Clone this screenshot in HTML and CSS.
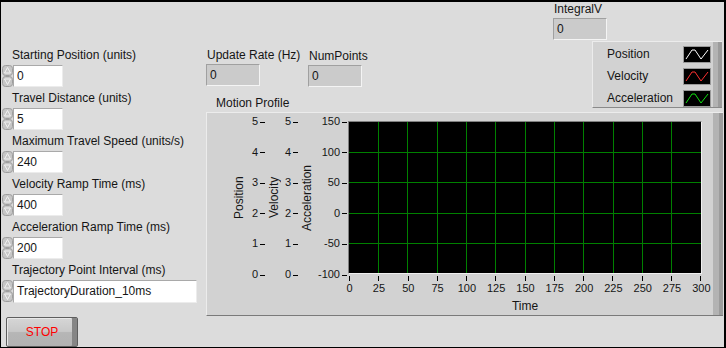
FILE: index.html
```html
<!DOCTYPE html>
<html>
<head>
    <title>Motion Profile</title>
    <link rel="stylesheet" href="styles.css">
</head>
<body>

    <div class="panel">

        <div class="controls">
            <div class="field">
                <label class="label">Starting Position (units)</label>
                <div class="entry">
                    <svg class="spin" width="11" height="22" viewBox="0 0 11 22"><rect x="0.5" y="0.5" width="10" height="10" rx="3" fill="#c6c6c6" stroke="#9e9e9e"/><path d="M5.5 2.5 L8.5 8 H2.5 Z" fill="none" stroke="#f2f2f2"/><rect x="0.5" y="11.5" width="10" height="10" rx="3" fill="#c6c6c6" stroke="#9e9e9e"/><path d="M5.5 19.5 L8.5 14 H2.5 Z" fill="none" stroke="#f2f2f2"/></svg>
                    <div class="input">0</div>
                </div>
            </div>
            <div class="field">
                <label class="label">Travel Distance (units)</label>
                <div class="entry">
                    <svg class="spin" width="11" height="22" viewBox="0 0 11 22"><rect x="0.5" y="0.5" width="10" height="10" rx="3" fill="#c6c6c6" stroke="#9e9e9e"/><path d="M5.5 2.5 L8.5 8 H2.5 Z" fill="none" stroke="#f2f2f2"/><rect x="0.5" y="11.5" width="10" height="10" rx="3" fill="#c6c6c6" stroke="#9e9e9e"/><path d="M5.5 19.5 L8.5 14 H2.5 Z" fill="none" stroke="#f2f2f2"/></svg>
                    <div class="input">5</div>
                </div>
            </div>
            <div class="field">
                <label class="label">Maximum Travel Speed (units/s)</label>
                <div class="entry">
                    <svg class="spin" width="11" height="22" viewBox="0 0 11 22"><rect x="0.5" y="0.5" width="10" height="10" rx="3" fill="#c6c6c6" stroke="#9e9e9e"/><path d="M5.5 2.5 L8.5 8 H2.5 Z" fill="none" stroke="#f2f2f2"/><rect x="0.5" y="11.5" width="10" height="10" rx="3" fill="#c6c6c6" stroke="#9e9e9e"/><path d="M5.5 19.5 L8.5 14 H2.5 Z" fill="none" stroke="#f2f2f2"/></svg>
                    <div class="input">240</div>
                </div>
            </div>
            <div class="field">
                <label class="label">Velocity Ramp Time (ms)</label>
                <div class="entry">
                    <svg class="spin" width="11" height="22" viewBox="0 0 11 22"><rect x="0.5" y="0.5" width="10" height="10" rx="3" fill="#c6c6c6" stroke="#9e9e9e"/><path d="M5.5 2.5 L8.5 8 H2.5 Z" fill="none" stroke="#f2f2f2"/><rect x="0.5" y="11.5" width="10" height="10" rx="3" fill="#c6c6c6" stroke="#9e9e9e"/><path d="M5.5 19.5 L8.5 14 H2.5 Z" fill="none" stroke="#f2f2f2"/></svg>
                    <div class="input">400</div>
                </div>
            </div>
            <div class="field">
                <label class="label">Acceleration Ramp Time (ms)</label>
                <div class="entry">
                    <svg class="spin" width="11" height="22" viewBox="0 0 11 22"><rect x="0.5" y="0.5" width="10" height="10" rx="3" fill="#c6c6c6" stroke="#9e9e9e"/><path d="M5.5 2.5 L8.5 8 H2.5 Z" fill="none" stroke="#f2f2f2"/><rect x="0.5" y="11.5" width="10" height="10" rx="3" fill="#c6c6c6" stroke="#9e9e9e"/><path d="M5.5 19.5 L8.5 14 H2.5 Z" fill="none" stroke="#f2f2f2"/></svg>
                    <div class="input">200</div>
                </div>
            </div>
            <div class="field">
                <label class="label">Trajectory Point Interval (ms)</label>
                <div class="entry">
                    <svg class="spin" width="11" height="22" viewBox="0 0 11 22"><rect x="0.5" y="0.5" width="10" height="10" rx="3" fill="#c6c6c6" stroke="#9e9e9e"/><path d="M5.5 2.5 L8.5 8 H2.5 Z" fill="none" stroke="#f2f2f2"/><rect x="0.5" y="11.5" width="10" height="10" rx="3" fill="#c6c6c6" stroke="#9e9e9e"/><path d="M5.5 19.5 L8.5 14 H2.5 Z" fill="none" stroke="#f2f2f2"/></svg>
                    <div class="input ring">TrajectoryDuration_10ms</div>
                </div>
            </div>
            <button class="stop">STOP</button>
        </div>

        <div class="main">
            <div class="top">
                <div class="readouts">
                    <div class="indicators">
                        <div class="readout">
                            <div class="label">Update Rate (Hz)</div>
                            <div class="value">0</div>
                        </div>
                        <div class="readout numpoints">
                            <div class="label">NumPoints</div>
                            <div class="value">0</div>
                        </div>
                    </div>
                    <div class="label graph-label">Motion Profile</div>
                </div>
                <div class="side">
                    <div class="readout">
                        <div class="label">IntegralV</div>
                        <div class="value">0</div>
                    </div>
                    <div class="legend">
                        <span>Position</span>
                        <svg width="28" height="17" viewBox="0 0 28 17"><rect x="0.5" y="0.5" width="27" height="16" fill="#000" stroke="#9a9a9a"/><polyline points="3,13 9,4 12,4 18,13 25,4" fill="none" stroke="#fff"/></svg>
                        <span>Velocity</span>
                        <svg width="28" height="17" viewBox="0 0 28 17"><rect x="0.5" y="0.5" width="27" height="16" fill="#000" stroke="#9a9a9a"/><polyline points="3,13 9,4 12,4 18,13 25,4" fill="none" stroke="#ff3030"/></svg>
                        <span>Acceleration</span>
                        <svg width="28" height="17" viewBox="0 0 28 17"><rect x="0.5" y="0.5" width="27" height="16" fill="#000" stroke="#9a9a9a"/><polyline points="3,13 9,4 12,4 18,13 25,4" fill="none" stroke="#10e010"/></svg>
                    </div>
                </div>
            </div>

            <div class="graph">
                <div class="axis-title t1">Position</div>
                <div class="scale s1"><span>5</span><span>4</span><span>3</span><span>2</span><span>1</span><span>0</span></div>
                <div class="axis-title t2">Velocity</div>
                <div class="scale s2"><span>5</span><span>4</span><span>3</span><span>2</span><span>1</span><span>0</span></div>
                <div class="axis-title t3">Acceleration</div>
                <div class="scale s3"><span>150</span><span>100</span><span>50</span><span>0</span><span>-50</span><span>-100</span></div>
                <div class="plot-area">
                    <div class="plot">
                        <svg width="352" height="151" viewBox="0 0 352 151">
                            <g fill="#008000">
                                <rect x="29" y="0" width="1" height="151"/>
                                <rect x="58" y="0" width="1" height="151"/>
                                <rect x="88" y="0" width="1" height="151"/>
                                <rect x="117" y="0" width="1" height="151"/>
                                <rect x="146" y="0" width="1" height="151"/>
                                <rect x="176" y="0" width="1" height="151"/>
                                <rect x="205" y="0" width="1" height="151"/>
                                <rect x="234" y="0" width="1" height="151"/>
                                <rect x="264" y="0" width="1" height="151"/>
                                <rect x="293" y="0" width="1" height="151"/>
                                <rect x="322" y="0" width="1" height="151"/>
                                <rect x="0" y="30" width="352" height="1"/>
                                <rect x="0" y="60" width="352" height="1"/>
                                <rect x="0" y="91" width="352" height="1"/>
                                <rect x="0" y="121" width="352" height="1"/>
                            </g>
                        </svg>
                    </div>
                    <div class="xticks"><span></span><span></span><span></span><span></span><span></span><span></span><span></span><span></span><span></span><span></span><span></span><span></span></div>
                    <div class="xlabels"><span>0</span><span>25</span><span>50</span><span>75</span><span>100</span><span>125</span><span>150</span><span>175</span><span>200</span><span>225</span><span>250</span><span>275</span><span>300</span></div>
                    <div class="x-title">Time</div>
                </div>
            </div>
        </div>

    </div>

</body>
</html>
```

FILE: styles.css
```css
body {
    margin: 0;
    font-family: 'Liberation Sans', Arial, sans-serif;
    font-size: 12px;
    color: #151515;
    background: #dcdcdc;
}

.panel {
    display: flex;
    width: 726px;
    height: 348px;
    box-sizing: border-box;
    border: 1px solid #000;
    border-top-width: 2px;
    border-right-width: 2px;
    background: #dcdcdc;
    overflow: hidden;
}

.label {
    display: block;
    height: 14px;
    line-height: 14px;
    white-space: nowrap;
}

/* left column of controls */

.controls {
    width: 204px;
    padding: 46px 0 0 1px;
    display: flex;
    flex-direction: column;
    align-items: flex-start;
}

.field {
    margin-bottom: 4px;
}

.field .label {
    margin-left: 10px;
    margin-bottom: 3px;
}

.entry {
    display: flex;
    align-items: flex-start;
}

.spin {
    display: block;
}

.input {
    width: 45px;
    height: 20px;
    line-height: 20px;
    padding-left: 3px;
    background: #fff;
    border: 1px solid;
    border-color: #a9a9a9 #ececec #ececec #a9a9a9;
}

.input.ring {
    width: 179px;
    height: 21px;
    line-height: 21px;
}

.stop {
    margin: 10px 0 0 4px;
    width: 72px;
    height: 34px;
    padding: 0;
    border: 1px solid #5e5e5e;
    border-radius: 2px;
    font-family: 'Liberation Sans', Arial, sans-serif;
    font-size: 12px;
    color: #ff0000;
    background: linear-gradient(#d6d6d6, #c8c8c8 48%, #b6b6b6 52%, #b2b2b2);
    box-shadow: inset -5px 0 0 #858585, inset 1px 1px 0 #e8e8e8;
}

/* right side */

.main {
    flex: 1;
    display: flex;
    flex-direction: column;
}

.top {
    height: 110px;
    display: flex;
    justify-content: space-between;
}

.readouts {
    padding-top: 46px;
}

.indicators {
    display: grid;
    grid-template-columns: 102px auto;
}

.readout .label {
    margin-left: 1px;
    margin-bottom: 2px;
}

.value {
    width: 49px;
    height: 20px;
    line-height: 20px;
    padding-left: 3px;
    background: #cbcbcb;
    border: 1px solid;
    border-color: #a0a0a0 #f4f4f4 #f4f4f4 #a0a0a0;
}

.numpoints {
    margin-top: 1px;
}

.graph-label {
    margin: 9px 0 0 10px;
}

.side {
    width: 169px;
    margin-right: 2px;
}

.legend {
    margin: 1px 0 0 39px;
    height: 67px;
    box-sizing: border-box;
    padding: 1px 11px 0 14px;
    display: grid;
    grid-template-columns: 1fr 28px;
    grid-auto-rows: 22px;
    align-items: center;
    background: #d2d2d2;
    border-left: 1px solid #ececec;
    border-top: 1px solid #ececec;
    border-bottom: 1px solid #8a8a8a;
    box-shadow: inset -4px 0 0 #9c9c9c, inset -9px 0 0 #b3b3b3;
}

.legend svg {
    display: block;
}

/* graph */

.graph {
    height: 204px;
    margin-right: 1px;
    box-sizing: border-box;
    padding: 8px 0 0 24px;
    display: flex;
    align-items: flex-start;
    background: #d2d2d2;
    border-top: 1px solid #ececec;
    border-left: 1px solid #ececec;
    border-bottom: 1px solid #7a7a7a;
    box-shadow: inset -4px 0 0 #9c9c9c, inset -10px 0 0 #b3b3b3;
}

.axis-title {
    writing-mode: vertical-rl;
    transform: rotate(180deg);
    height: 153px;
    text-align: center;
    line-height: 16px;
    white-space: nowrap;
}

.t1 { width: 17px; }
.t2 { width: 15px; }
.t3 { width: 16px; }

.scale {
    height: 167px;
    margin-top: -7px;
    display: flex;
    flex-direction: column;
    justify-content: space-between;
    align-items: flex-end;
    font-size: 11px;
}

.scale span {
    height: 14px;
    line-height: 14px;
}

.scale span::after {
    content: "";
    display: inline-block;
    width: 5px;
    height: 1px;
    margin-left: 2px;
    vertical-align: middle;
    background: #000;
}

.s1 { width: 17px; padding-right: 1px; }
.s2 { width: 17px; padding-right: 1px; }
.s3 { width: 32px; padding-right: 1px; }

.plot-area {
    width: 354px;
}

.plot {
    height: 151px;
    background: #000;
    border: 1px solid;
    border-color: #808080 #f0f0f0 #f0f0f0 #808080;
}

.plot svg {
    display: block;
}

.xticks {
    display: flex;
    width: 352px;
    height: 5px;
    margin: 2px 0 0 1px;
}

.xticks span {
    flex: 1;
    border-left: 1px solid #000;
}

.xticks span:last-child {
    border-right: 1px solid #000;
}

.xlabels {
    display: grid;
    grid-template-columns: repeat(13, 1fr);
    width: 381px;
    margin-left: -13px;
    height: 14px;
    line-height: 14px;
    font-size: 11px;
    text-align: center;
}

.x-title {
    margin-top: 4px;
    text-align: center;
    height: 14px;
    line-height: 14px;
}
```
